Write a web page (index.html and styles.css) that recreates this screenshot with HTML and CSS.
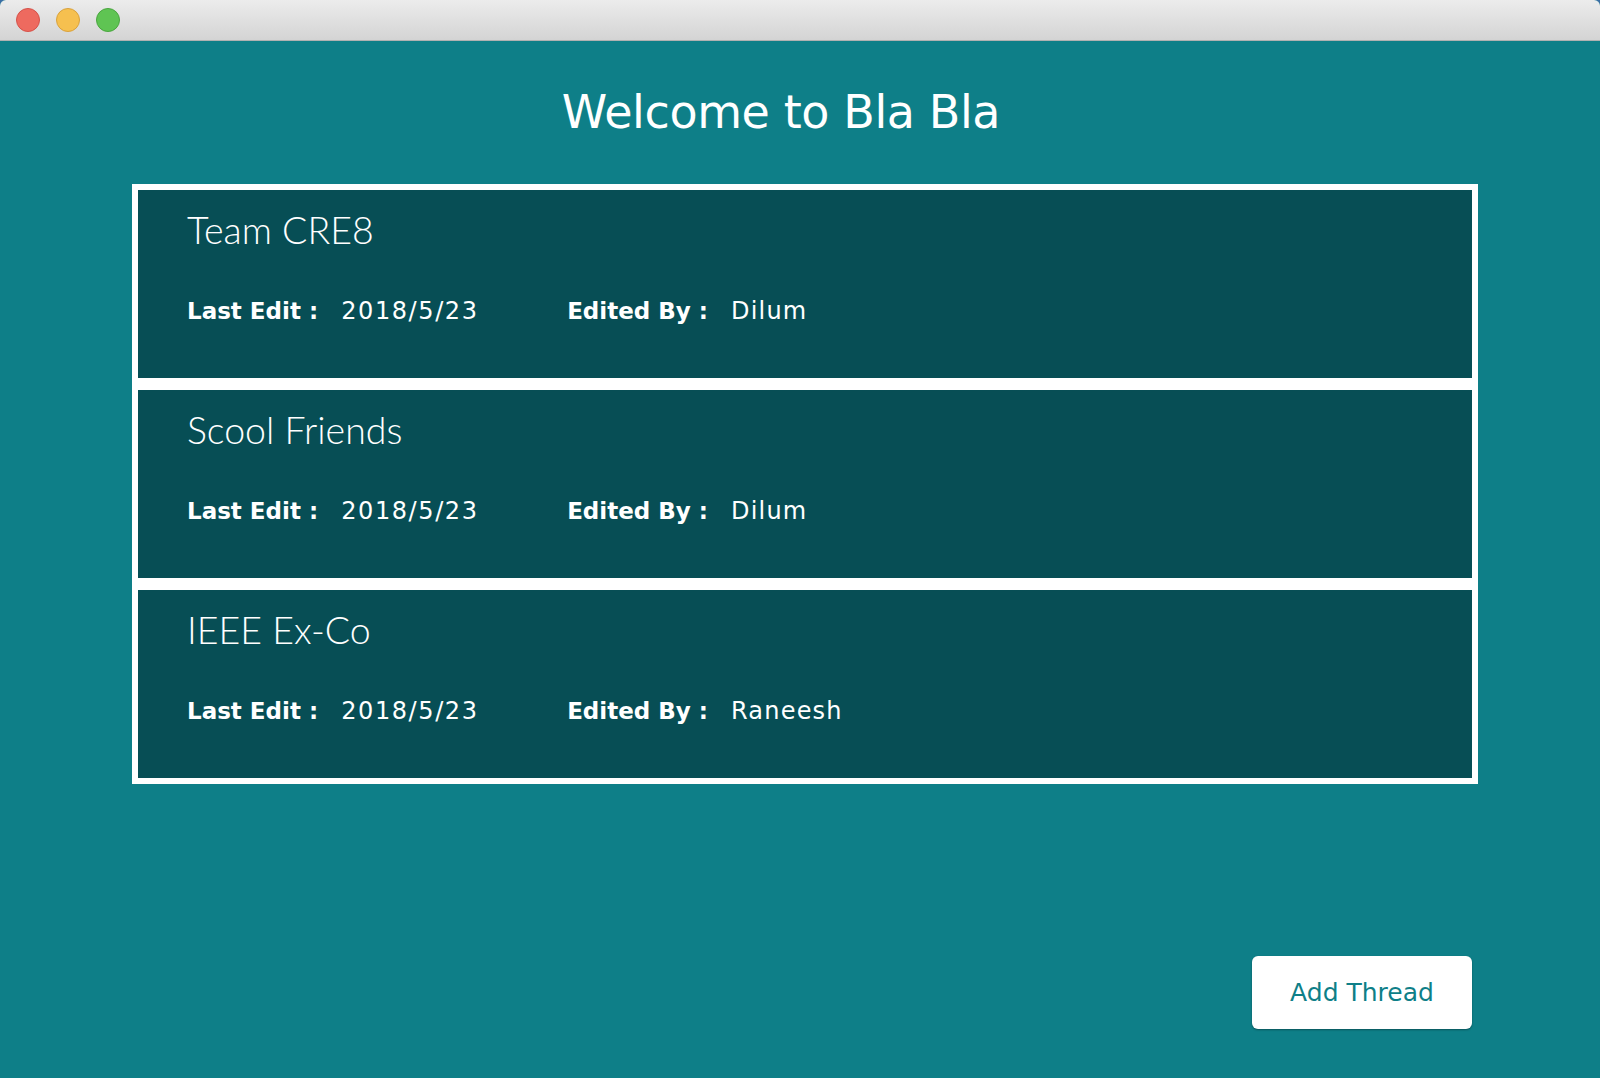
FILE: index.html
```html
<!DOCTYPE html>
<html>
<head>
<meta charset="utf-8">
<link rel="stylesheet" href="styles.css">
</head>
<body>
<div class="window">
  <div class="titlebar">
    <span class="light red"></span>
    <span class="light yellow"></span>
    <span class="light green"></span>
  </div>
  <main class="content">
    <h1 class="heading">Welcome to Bla Bla</h1>
    <div class="frame">
      <div class="card">
        <div class="card-title">Team CRE8</div>
        <div class="meta">
          <span class="label">Last Edit :</span><span class="value date">2018/5/23</span>
          <span class="label">Edited By :</span><span class="value">Dilum</span>
        </div>
      </div>
      <div class="card">
        <div class="card-title">Scool Friends</div>
        <div class="meta">
          <span class="label">Last Edit :</span><span class="value date">2018/5/23</span>
          <span class="label">Edited By :</span><span class="value">Dilum</span>
        </div>
      </div>
      <div class="card">
        <div class="card-title">IEEE Ex-Co</div>
        <div class="meta">
          <span class="label">Last Edit :</span><span class="value date">2018/5/23</span>
          <span class="label">Edited By :</span><span class="value">Raneesh</span>
        </div>
      </div>
    </div>
    <div class="actions">
      <button class="add-btn">Add Thread</button>
    </div>
  </main>
</div>
</body>
</html>
```

FILE: styles.css
```css
html, body {
  margin: 0;
  padding: 0;
  background: #3b6ea5;
}
.window {
  width: 1600px;
  height: 1078px;
  display: flex;
  flex-direction: column;
  background: #0e7f88;
  border-top-left-radius: 6px;
  border-top-right-radius: 6px;
  overflow: hidden;
}
.titlebar {
  height: 40px;
  flex: none;
  display: flex;
  align-items: center;
  gap: 16px;
  padding-left: 16px;
  background: linear-gradient(#ececec, #d4d4d4);
  border-bottom: 1px solid #b1b1b1;
}
.light {
  width: 24px;
  height: 24px;
  border-radius: 50%;
  box-sizing: border-box;
}
.red { background: #ee6a5f; border: 1px solid #d5524a; }
.yellow { background: #f6c04f; border: 1px solid #d9a23d; }
.green { background: #5fc453; border: 1px solid #4aa63f; }
.content {
  flex: 1;
  display: flex;
  flex-direction: column;
  padding: 0 122px 49px 132px;
}
.heading {
  flex: none;
  margin: 0;
  padding: 41px 48px 0 0;
  height: 143px;
  box-sizing: border-box;
  text-align: center;
  font-family: "DejaVu Sans", sans-serif;
  font-weight: normal;
  font-size: 46px;
  letter-spacing: -0.4px;
  line-height: 60px;
  color: #ffffff;
}
.frame {
  flex: none;
  border: 6px solid #ffffff;
  background: #ffffff;
  display: flex;
  flex-direction: column;
  gap: 12px;
}
.card {
  height: 188px;
  box-sizing: border-box;
  background: #074e55;
  padding: 15px 49px 0;
  color: #ffffff;
}
.card-title {
  font-family: Lato, sans-serif;
  font-weight: 300;
  font-size: 37.5px;
  line-height: 50px;
}
.meta {
  margin-top: 41px;
  display: flex;
  align-items: baseline;
  font-family: "DejaVu Sans", sans-serif;
  font-size: 24px;
  line-height: 30px;
}
.label {
  font-weight: bold;
  font-size: 23px;
}
.value {
  margin-left: 23px;
  letter-spacing: 1.2px;
}
.date {
  width: 226px;
  letter-spacing: 1.6px;
}
.actions {
  margin-top: auto;
  display: flex;
  justify-content: flex-end;
  padding-right: 6px;
}
.add-btn {
  width: 220px;
  height: 73px;
  background: #ffffff;
  border: none;
  border-radius: 6px;
  box-shadow: 0 1px 2px rgba(0,0,0,0.35);
  font-family: "DejaVu Sans", sans-serif;
  font-size: 25px;
  color: #0e7f88;
  padding: 0;
}
```
